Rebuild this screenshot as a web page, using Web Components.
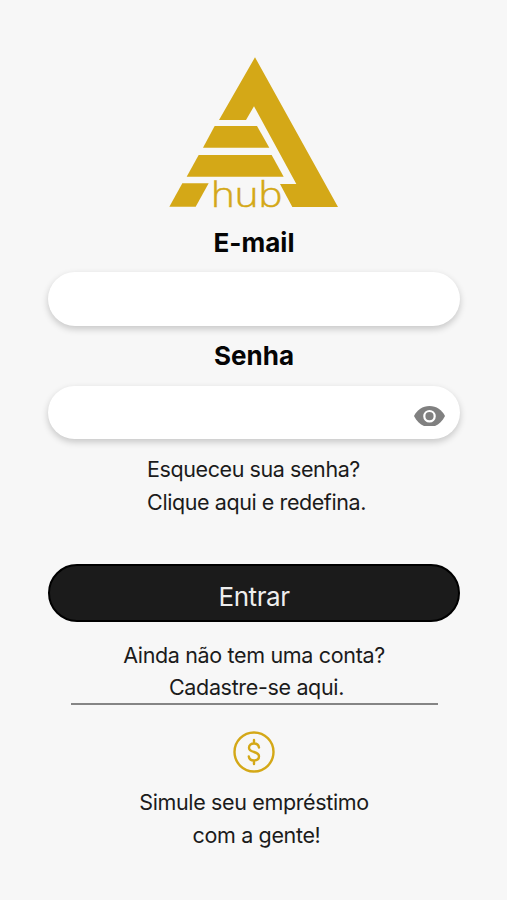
<!DOCTYPE html>
<html lang="pt-BR">
<head>
<meta charset="UTF-8">
<meta name="viewport" content="width=device-width, initial-scale=1">
<title>A hub - Entrar</title>
<style>
    body {
        margin: 0;
        background: #f7f7f7;
        color: #1b1b1b;
        font-family: Inter, "Liberation Sans", sans-serif;
    }
</style>
</head>
<body>
<hub-login>
    <hub-logo></hub-logo>
    <hub-field label="E-mail"></hub-field>
    <hub-field label="Senha" type="password"></hub-field>
    <hub-text class="forgot"><span>Esqueceu sua senha?</span><span>Clique aqui e redefina.</span></hub-text>
    <hub-button>Entrar</hub-button>
    <hub-text class="signup"><span>Ainda não tem uma conta?</span><span>Cadastre-se aqui.</span></hub-text>
    <hub-loan><span>Simule seu empréstimo</span><span>com a gente!</span></hub-loan>
</hub-login>

<script>
class HubLogin extends HTMLElement {
    constructor() {
        super();
        this.attachShadow({ mode: 'open' });
        this.shadowRoot.innerHTML = `
            <style>
                :host {
                    display: flex;
                    flex-direction: column;
                    align-items: center;
                    box-sizing: border-box;
                    height: 900px;
                    padding: 50px 47px 0 48px;
                    overflow: hidden;
                }

                ::slotted(.forgot) {
                    margin-top: 14px;
                    padding-left: 5px;
                    text-align: left;
                    letter-spacing: -0.42px;
                }

                ::slotted(.signup) {
                    --second-line-indent: 5px;
                    margin-top: 16.5px;
                    letter-spacing: -0.34px;
                }
            </style>
            <slot></slot>
        `;
    }
}

class HubLogo extends HTMLElement {
    constructor() {
        super();
        this.attachShadow({ mode: 'open' });
        this.shadowRoot.innerHTML = `
            <style>
                :host {
                    display: block;
                    height: 165px;
                    padding-left: 2px;
                }

                svg {
                    display: block;
                    overflow: visible;
                    fill: #d4a817;
                }

                text {
                    font: 300 102px "Open Sans", "Noto Sans", sans-serif;
                    stroke: #d4a817;
                    stroke-width: 1.5;
                }
            </style>
            <svg width="190" height="175" viewBox="0 0 570 525">
                <path d="M285 22L534 471H397L360 402H409L282 169L258 210H177Z"/>
                <path d="M164 228H291L328 293H129Z"/>
                <path d="M116 315H335L371 380H80Z"/>
                <path d="M67 400H146L107 470H28Z"/>
                <text x="153" y="471" textLength="214" lengthAdjust="spacingAndGlyphs">hub</text>
            </svg>
        `;
    }
}

class HubField extends HTMLElement {
    constructor() {
        super();
        this.attachShadow({ mode: 'open' });
        this.shadowRoot.innerHTML = `
            <style>
                :host {
                    display: block;
                    width: 100%;
                }

                label {
                    display: block;
                    height: 57px;
                    line-height: 55px;
                    color: #050505;
                    font-size: 26px;
                    font-weight: 700;
                    text-align: center;
                }

                :host([type="password"]) label {
                    height: 60px;
                    line-height: 59px;
                }

                .box {
                    display: flex;
                    align-items: center;
                    box-sizing: border-box;
                    height: 54px;
                    padding: 0 15px 0 24px;
                    border-radius: 27px;
                    background: #fff;
                    box-shadow: 0 3px 7px rgba(0, 0, 0, 0.2);
                }

                :host([type="password"]) .box {
                    height: 53px;
                }

                input {
                    flex: 1;
                    min-width: 0;
                    border: 0;
                    outline: 0;
                    background: none;
                    font: inherit;
                    font-size: 22px;
                }

                svg {
                    display: none;
                    margin-top: 7px;
                }

                :host([type="password"]) svg {
                    display: block;
                }
            </style>
            <label for="input"></label>
            <div class="box">
                <input id="input">
                <svg width="31" height="20" viewBox="0 0 31 20">
                    <path fill="#808080" d="M0 10C3 4 8.500 0 15.500 0S28 4 31 10C28.500 15 25 18.500 21 20H10C6 18.500 2.500 15 0 10Z"/>
                    <circle cx="15.500" cy="10.200" r="5.200" fill="#808080" stroke="#fff" stroke-width="2.200"/>
                </svg>
            </div>
        `;
    }

    connectedCallback() {
        this.shadowRoot.querySelector('label').textContent = this.getAttribute('label');
        this.shadowRoot.querySelector('input').type = this.getAttribute('type') || 'text';
    }
}

class HubText extends HTMLElement {
    constructor() {
        super();
        this.attachShadow({ mode: 'open' });
        this.shadowRoot.innerHTML = `
            <style>
                :host {
                    display: block;
                    font-size: 21.5px;
                    line-height: 32.5px;
                    text-align: center;
                    white-space: nowrap;
                }

                ::slotted(span) {
                    display: block;
                }

                ::slotted(span:last-child) {
                    padding-left: var(--second-line-indent, 0);
                }
            </style>
            <slot></slot>
        `;
    }
}

class HubButton extends HTMLElement {
    constructor() {
        super();
        this.attachShadow({ mode: 'open' });
        this.shadowRoot.innerHTML = `
            <style>
                :host {
                    display: block;
                    width: 100%;
                    margin-top: 46px;
                }

                button {
                    display: block;
                    box-sizing: border-box;
                    width: 100%;
                    height: 58px;
                    padding: 7px 0 0;
                    border: 2px solid #000;
                    border-radius: 29px;
                    background: #1b1b1b;
                    color: #eee;
                    font: inherit;
                    font-size: 26px;
                    letter-spacing: -0.45px;
                }
            </style>
            <button type="button"><slot></slot></button>
        `;
    }
}

class HubLoan extends HTMLElement {
    constructor() {
        super();
        this.attachShadow({ mode: 'open' });
        this.shadowRoot.innerHTML = `
            <style>
                :host {
                    display: flex;
                    flex-direction: column;
                    align-items: center;
                    box-sizing: border-box;
                    width: 367px;
                    margin-top: -1px;
                    padding-top: 26px;
                    border-top: 2px solid #858585;
                    font-size: 21.5px;
                    line-height: 32.5px;
                    letter-spacing: -0.36px;
                    white-space: nowrap;
                }

                svg {
                    margin-bottom: 13.5px;
                    fill: none;
                    stroke: #d4a817;
                    stroke-width: 2.4;
                }

                ::slotted(span:last-child) {
                    padding-left: 5px;
                }
            </style>
            <svg width="42" height="42" viewBox="0 0 42 42">
                <circle cx="21" cy="21" r="19.500"/>
                <path stroke-linecap="round" d="M21 9V12.500M21 29.500V33M26 16.500C25.500 13.500 23.500 12.500 21 12.500C18 12.500 16 14.200 16 16.700C16 19.500 18.500 20.200 21 21C23.500 21.800 26 22.600 26 25.300C26 28 23.800 29.500 21 29.500C18.200 29.500 16.200 28.200 15.800 25.500"/>
            </svg>
            <slot></slot>
        `;
    }
}

customElements.define('hub-login', HubLogin);
customElements.define('hub-logo', HubLogo);
customElements.define('hub-field', HubField);
customElements.define('hub-text', HubText);
customElements.define('hub-button', HubButton);
customElements.define('hub-loan', HubLoan);
</script>
</body>
</html>
